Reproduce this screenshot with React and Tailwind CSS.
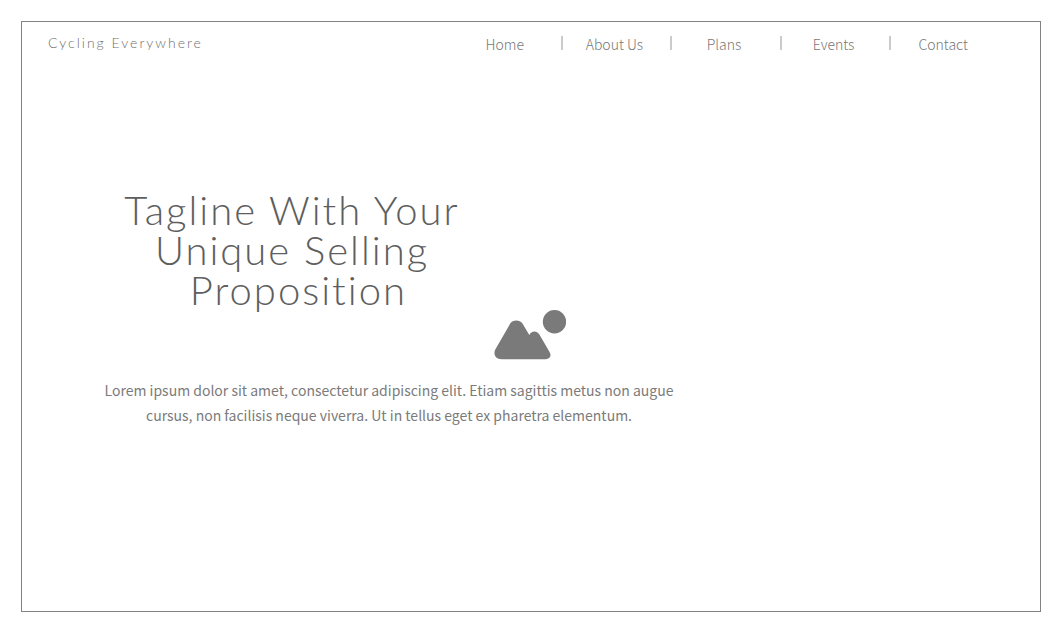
const links = ["Home", "About Us", "Plans", "Events", "Contact"];

function Header() {
  return (
    <header className="flex items-start justify-between pl-[26px] pr-[41px] pt-[11px]">
      <a
        href="#home"
        className="font-['Lato',sans-serif] text-sm font-light leading-5 tracking-[2px] text-[#6f6f6f]"
      >
        Cycling Everywhere
      </a>
      <nav aria-label="Main" className="w-[548px]">
        <ul className="grid grid-cols-5">
          {links.map((label, i) => (
            <li key={label} className="flex items-start">
              <span
                aria-hidden="true"
                className={i === 0 ? "h-3.5 w-0.5" : "mt-[3px] h-3.5 w-0.5 bg-[#cbcbcb]"}
              />
              <a
                href={"#" + label.toLowerCase().replace(" ", "-")}
                className="flex-1 pr-1 text-center text-sm font-light leading-[22px] text-[#777777]"
              >
                {label}
              </a>
            </li>
          ))}
        </ul>
      </nav>
    </header>
  );
}

function PicturePlaceholder() {
  return (
    <svg
      role="img"
      aria-label="Image placeholder"
      viewBox="0 0 72 50"
      className="h-[50px] w-[72px] fill-[#7a7a7a]"
    >
      <circle cx="60.5" cy="11.7" r="11.7" />
      <path d="M16.2 13.6C18.5 9.5 26 9.5 28.5 13.6L35.3 25.1C37.2 20.7 42.8 20.4 45.4 24.6L55.7 42.3C57.8 46 55.5 49.2 51.8 49.2H7.5C2 49.2-1.2 44.5 1.3 39.6Z" />
    </svg>
  );
}

export default function App() {
  return (
    <div className="flex min-h-screen flex-col bg-white pb-[19px] pl-[21px] pr-[19px] pt-[21px] font-['Noto_Sans_CJK_SC',sans-serif]">
      <div className="flex flex-1 flex-col border border-[#828282]">
        <Header />
        <main className="flex flex-col pt-[135px]">
          <h1 className="ml-[70px] w-[400px] text-center font-['Lato',sans-serif] text-[40px] font-light leading-10 tracking-[2px] text-[#5e5e5e]">
            Tagline With Your Unique Selling {"\u00a0"}Proposition
          </h1>
          <div className="flex justify-center pr-0.5">
            <PicturePlaceholder />
          </div>
          <p className="ml-[67px] mt-[18px] w-[600px] text-center text-sm leading-[25px] text-[#7b7b7b]">
            Lorem ipsum dolor sit amet, consectetur adipiscing elit. Etiam sagittis metus non augue
            cursus, non facilisis neque viverra. Ut in tellus eget ex pharetra elementum.
          </p>
        </main>
      </div>
    </div>
  );
}
